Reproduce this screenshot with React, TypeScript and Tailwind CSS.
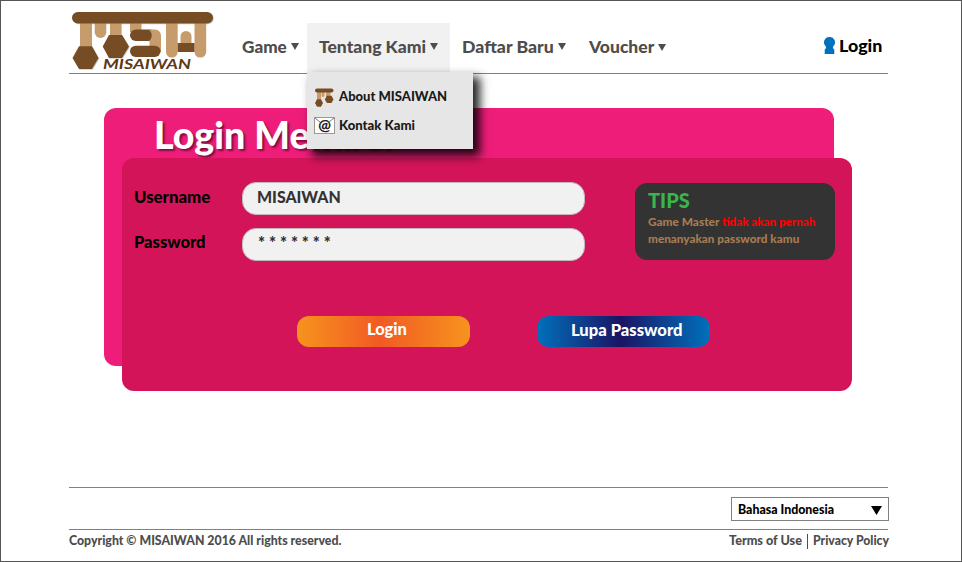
import { useLayoutEffect, useRef, useState, type ReactNode } from 'react';

type FitProps = { width: number; className?: string; children: ReactNode };

/** One line of text condensed or widened horizontally to an exact measure. */
function Fit({ width, className = '', children }: FitProps) {
  const ref = useRef<HTMLSpanElement>(null);
  const [scale, setScale] = useState(1);
  useLayoutEffect(() => {
    if (ref.current) setScale(width / ref.current.offsetWidth);
  }, [width]);
  return (
    <span className={`block shrink-0 whitespace-nowrap ${className}`} style={{ width }}>
      <span ref={ref} className="inline-block origin-left" style={{ transform: `scaleX(${scale})` }}>
        {children}
      </span>
    </span>
  );
}

function Caret({ className = '' }: { className?: string }) {
  return (
    <svg viewBox="0 0 8 7" className={`h-[7px] w-2 shrink-0 fill-[#4d4d4d] ${className}`}>
      <path d="M0 0H8L4 7Z" />
    </svg>
  );
}

function Logo() {
  return (
    <svg viewBox="70 10 146 62" className="-mt-px h-[62px] w-[146px] shrink-0">
      <g transform="translate(.8 .8)" fill="#b9b4af" opacity=".7">
        <rect x="72" y="12" width="141" height="11.500" rx="5.750" />
        <path d="M72.500 58L79 46.200H92L98.500 58L92 69H79Z" />
        <path d="M102.700 46.500L109 35H122L129 46.500L122 58H109Z" />
      </g>
      <g fill="#c69c6d">
        <rect x="80" y="20" width="12" height="27" />
        <rect x="94.700" y="17" width="11.600" height="21" rx="5.800" />
        <rect x="110" y="20" width="11.600" height="16" />
        <rect x="130" y="20" width="11.500" height="12" />
        <rect x="166" y="16" width="11.700" height="41.500" rx="5.500" />
        <rect x="194.500" y="16" width="11.700" height="41.500" rx="5.500" />
        <path d="M180.500 44V36.500a5.500 5.500 0 0 1 11 0V44Z" />
      </g>
      <g fill="#754c24">
        <rect x="72" y="12" width="141" height="11.500" rx="5.750" />
        <path d="M72.500 58L79 46.200H92L98.500 58L92 69H79Z" />
        <path d="M102.700 46.500L109 35H122L129 46.500L122 58H109Z" />
        <rect x="130" y="29.500" width="26" height="11.500" rx="5.750" />
        <rect x="177.700" y="43" width="16.800" height="9" />
      </g>
      <path d="M148 29.500H155a6 6 0 0 1 6 6V52H149.500V40.500c1.500-1 2.200-3 2.200-5.200s-1.200-5-3.700-5.800Z" fill="#c69c6d" />
      <rect x="130" y="45.700" width="30.500" height="11.300" rx="5.650" fill="#754c24" />
      <text
        x="103"
        y="68.800"
        fontSize="13.500"
        fontWeight="700"
        fontStyle="italic"
        fontFamily="Lato, sans-serif"
        textLength="88"
        lengthAdjust="spacingAndGlyphs"
        fill="#603813"
      >
        MISAIWAN
      </text>
    </svg>
  );
}

function MiniLogo() {
  return (
    <svg viewBox="0 0 20 20" className="h-5 w-5 shrink-0">
      <g fill="#c69c6d">
        <rect x="2" y="2" width="4" height="10" />
        <path d="M6.500 3h3v4.500a1.500 1.500 0 0 1-3 0Z" />
        <rect x="11" y="2" width="4.500" height="8" />
      </g>
      <g fill="#754c24">
        <rect x="0" y="0.500" width="18.500" height="4" rx="2" />
        <path d="M0 15L2 11.200H6L8 15L6 18.800H2Z" />
        <path d="M9.800 11.500L12 7.800H16.500L18.500 11.500L16.500 15H12Z" />
      </g>
    </svg>
  );
}

function MailIcon() {
  return (
    <svg viewBox="0 0 21 17" className="h-[17px] w-[21px] shrink-0">
      <rect x=".5" y=".5" width="20" height="16" fill="#fff" stroke="#999" />
      <path d="M1 1L6 5M20 1L15 5" stroke="#777" fill="none" />
      <text x="10.500" y="12.500" textAnchor="middle" fontSize="15" fontFamily="Lato, sans-serif" fill="#222">
        @
      </text>
    </svg>
  );
}

export default function App() {
  return (
    <div className="h-[562px] w-[962px] overflow-hidden border border-[#555] bg-white pl-[68px] font-['Lato',sans-serif] font-black text-[#4d4d4d]">
      <div className="w-[819px]">
        <header className="relative z-10 flex h-[73px] items-start border-b border-[#808080] text-[17.5px] leading-5">
          <div className="ml-px pt-[10px]">
            <Logo />
          </div>
          <nav className="ml-[26px] flex pt-[22px]">
            <div className="flex h-[50px] w-[65px] pt-[14px]">
              <Fit width={45}>Game</Fit>
              <Caret className="ml-[4px] mt-[6px]" />
            </div>
            <div className="relative h-[50px] w-[143px] bg-[#f1f1f1]">
              <div className="flex pl-3 pt-[14px]">
                <Fit width={107}>Tentang Kami</Fit>
                <Caret className="ml-[4px] mt-[6px]" />
              </div>
              <div className="absolute left-0 top-[49px] flex h-[77px] w-[166px] flex-col bg-[#e6e6e6] pl-[7px] pt-[16px] text-[13.5px] text-[#1a1a1a] shadow-[6px_6px_9px_1px_rgba(0,0,0,0.85)]">
                <div className="flex h-[29px]">
                  <div className="w-[25px] pl-px">
                    <MiniLogo />
                  </div>
                  <Fit width={108} className="-mt-[2px]">About MISAIWAN</Fit>
                </div>
                <div className="flex">
                  <div className="w-[25px]">
                    <MailIcon />
                  </div>
                  <Fit width={76} className="-mt-[2px]">Kontak Kami</Fit>
                </div>
              </div>
            </div>
            <div className="flex w-[139px] pl-3 pt-[14px]">
              <Fit width={92}>Daftar Baru</Fit>
              <Caret className="ml-[4px] mt-[6px]" />
            </div>
            <div className="flex pt-[14px]">
              <Fit width={65}>Voucher</Fit>
              <Caret className="ml-[4px] mt-[7px]" />
            </div>
          </nav>
          <div className="ml-auto flex pr-[6px] pt-[35px] text-[17px] text-black">
            <svg viewBox="0 0 11 17" className="mr-[4px] mt-px h-[17px] w-[11px] fill-[#0071bc]">
              <path d="M5.500 0a5.400 5.400 0 0 1 3.800 9.300L8.800 11c1.300.9 1.500 1.600 1.500 3v3H.7v-3c0-1.400.2-2.100 1.500-3L1.700 9.300A5.400 5.400 0 0 1 5.500 0Z" />
            </svg>
            <Fit width={43}>Login</Fit>
          </div>
        </header>

        <main className="ml-[35px] mt-[34px] grid h-[283px] w-[748px]">
          <section className="col-start-1 row-start-1 h-[258px] w-[730px] rounded-xl bg-[#ee1d79] pl-[50px] pt-[3px]">
            <h1 className="text-[38.500px] leading-[46px] text-white [text-shadow:2px_2px_2px_rgba(60,0,30,0.6)]">
              <Fit width={243}>Login Member</Fit>
            </h1>
          </section>
          <section className="col-start-1 row-start-1 ml-[18px] mt-[50px] h-[233px] w-[730px] rounded-xl bg-[#d41459]">
            <div className="flex pl-3 pt-[24px]">
              <div className="w-[108px] pt-[5px] text-[17px] leading-5 text-black">
                <Fit width={76}>Username</Fit>
                <Fit width={72} className="mt-[25px]">Password</Fit>
              </div>
              <div className="flex w-[343px] flex-col gap-[13px] text-[17px] leading-5 text-[#333]">
                <div className="h-[33px] rounded-[14px] border border-[#c4b8bd] bg-[#f1f1f1] pl-[14px] pt-[4px]">
                  <Fit width={84}>MISAIWAN</Fit>
                </div>
                <div className="h-[33px] rounded-[14px] border border-[#c4b8bd] bg-[#f1f1f1] pl-[15px] pt-[4px]">
                  <Fit width={73}>* * * * * * *</Fit>
                </div>
              </div>
              <aside className="ml-[50px] mt-px h-[77px] w-[200px] rounded-xl bg-[#333] pl-[13px] pt-[5px] text-[11.5px] leading-[17px] text-[#a67c52]">
                <Fit width={42} className="mb-px text-[20px] leading-6 text-[#39b54a]">TIPS</Fit>
                <div className="flex gap-[3px]">
                  <Fit width={71}>Game Master</Fit>
                  <Fit width={93} className="text-[#ff0000]">tidak akan pernah</Fit>
                </div>
                <Fit width={151}>menanyakan password kamu</Fit>
              </aside>
            </div>
            <div className="mt-[55px] flex gap-[67px] pl-[175px] text-[16px] leading-5 text-white">
              <button className="h-[31px] w-[173px] rounded-[12px] bg-[linear-gradient(90deg,#f7931e,#f15a24_48%,#f7931e)] pb-[5px] pl-[70px]">
                <Fit width={40} className="text-left">Login</Fit>
              </button>
              <button className="h-[31px] w-[173px] rounded-[12px] bg-[linear-gradient(90deg,#0071bc,#1b1464_48%,#0071bc)] pb-[3px] pl-[34px]">
                <Fit width={111} className="text-left">Lupa Password</Fit>
              </button>
            </div>
          </section>
        </main>

        <footer className="mt-[96px] border-t border-[#808080] text-[13px] leading-5">
          <div className="flex h-[42px] justify-end border-b border-[#808080] pt-[9px]">
            <div className="-mr-px flex h-[24px] w-[158px] border border-[#808080] pl-[6px] pt-[1px] text-black">
              <Fit width={96}>Bahasa Indonesia</Fit>
              <svg viewBox="0 0 11 9" className="ml-[37px] mt-[7px] h-[9px] w-[11px] fill-black">
                <path d="M0 0H11L5.500 9Z" />
              </svg>
            </div>
          </div>
          <div className="-mr-px flex">
            <Fit width={272}>Copyright © MISAIWAN 2016 All rights reserved.</Fit>
            <Fit width={73} className="ml-auto">Terms of Use</Fit>
            <div className="mx-[5px] mt-[4px] h-[15px] w-px shrink-0 bg-[#4d4d4d]" />
            <Fit width={76}>Privacy Policy</Fit>
          </div>
        </footer>
      </div>
    </div>
  );
}
